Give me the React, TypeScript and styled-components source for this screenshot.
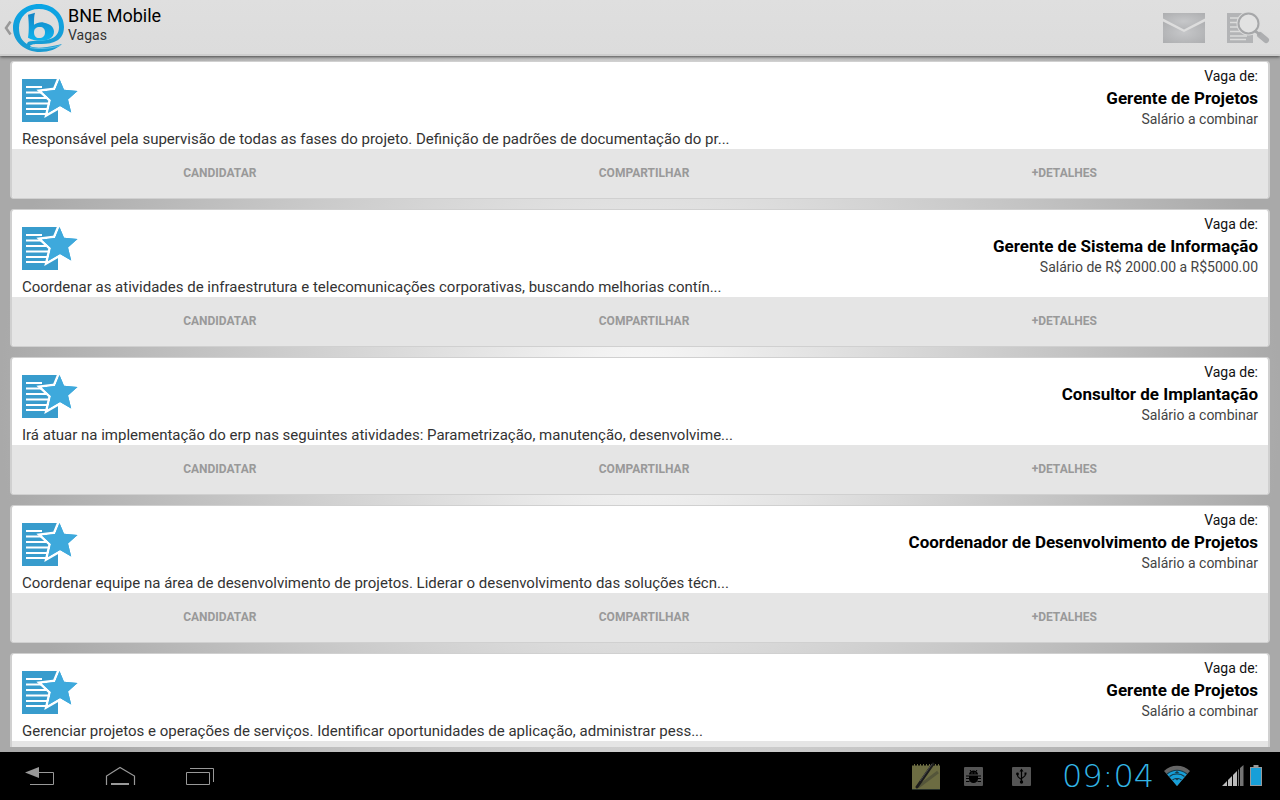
import React from "react";
import styled, { createGlobalStyle } from "styled-components";

const GlobalStyle = createGlobalStyle`
  *, *::before, *::after { box-sizing: border-box; }
  body {
    margin: 0;
    font-family: Roboto, "Noto Sans", sans-serif;
    color: #333;
  }
  button { font: inherit; color: inherit; border: 0; background: none; padding: 0; cursor: pointer; }
  h1, h2, p, ul { margin: 0; padding: 0; font-weight: 400; }
  svg { display: block; }
`;

const Screen = styled.div`
  display: flex;
  flex-direction: column;
  height: 100vh;
  background: #000;
`;

const ActionBar = styled.header`
  display: flex;
  flex: none;
  justify-content: space-between;
  height: 56px;
  padding-right: 10px;
  background: linear-gradient(#dfdfdf, #dcdcdc);
  border-bottom: 2px solid #cecece;
  box-shadow: 0 1px 3px #444;
  z-index: 1;
`;

const UpButton = styled.button`
  display: flex;
  gap: 3px;
  padding: 4px 0 0 4px;
  text-align: left;
`;

const UpContent = styled.span`
  display: flex;
  align-items: center;
  height: 48px;
`;

const Titles = styled.span`
  display: flex;
  flex-direction: column;
`;

const AppTitle = styled.span`
  font-size: 18px;
  line-height: 24px;
  color: #000;
`;

const ScreenTitle = styled.span`
  font-size: 14px;
  line-height: 14px;
`;

const Actions = styled.div`
  display: flex;
  align-items: center;
  gap: 21px;
  padding-top: 2px;
`;

const Main = styled.main`
  flex: 1;
  min-height: 0;
  padding: 5px 10px;
  background: radial-gradient(circle 640px at 50% 50%, #fafafa, #a9a9a9);
`;

const JobList = styled.ul`
  display: flex;
  flex-direction: column;
  gap: 10px;
  height: 100%;
  overflow-y: auto;
  scrollbar-width: none;
  list-style: none;
`;

const Card = styled.li`
  flex: none;
  border: solid #d0d0d0;
  border-width: 1px 2px;
  border-radius: 4px;
  background: #fff;
  overflow: hidden;
`;

const CardBody = styled.div`
  display: grid;
  grid-template-columns: auto 1fr;
  align-content: start;
  padding: 4px 10px 0;
  height: 87px;
`;

const JobIcon = styled.div`
  padding-top: 13px;
`;

const JobHeading = styled.div`
  height: 63px;
  text-align: right;
`;

const Kicker = styled.p`
  font-size: 14px;
  line-height: 20px;
  color: #111;
`;

const JobTitle = styled.h2`
  font-size: 17px;
  line-height: 24px;
  font-weight: 700;
  color: #000;
`;

const Salary = styled.p`
  font-size: 14px;
  line-height: 18px;
  color: #444;
`;

const Description = styled.p`
  grid-column: 1 / -1;
  font-size: 15px;
  line-height: 20px;
  white-space: nowrap;
`;

const CardActions = styled.div`
  display: flex;
  height: 49px;
  background: #e5e5e5;
`;

const CardAction = styled.button`
  flex: 1 1 auto;
  padding-bottom: 2px;
  font-size: 12px;
  line-height: 16px;
  font-weight: 700;
  color: #999;
`;

const SystemBar = styled.footer`
  display: flex;
  flex: none;
  justify-content: space-between;
  height: 48px;
  padding-right: 18px;
  background: #000;
`;

const NavKeys = styled.nav`
  display: flex;
`;

const NavKey = styled.button`
  display: grid;
  place-items: center;
  width: 80px;
`;

const Status = styled.div`
  display: flex;
  align-items: center;
`;

const Notifications = styled.div`
  display: flex;
  align-items: center;
  gap: 24px;
  padding-right: 16px;
`;

const Clock = styled.time`
  width: 112px;
  font-family: "DejaVu Sans Light", "DejaVu Sans", sans-serif;
  font-weight: 200;
  font-size: 32px;
  line-height: 40px;
  text-align: center;
  color: #33b5e5;
`;

const Gauges = styled.div`
  display: flex;
  align-items: center;
  gap: 6px;
`;

const Wifi = styled.div`
  padding-right: 32px;
`;

const Logo = () => (
  <svg width="52" height="48" viewBox="0 0 52 48" fill="none">
    <defs>
      <linearGradient id="ring" x1="0" y1="0" x2="0" y2="1">
        <stop offset="0" stopColor="#0aa5e6" />
        <stop offset="1" stopColor="#1c9ad0" />
      </linearGradient>
      <linearGradient id="letter" x1="0" y1="0" x2="0" y2="1">
        <stop offset="0" stopColor="#1483c4" />
        <stop offset="1" stopColor="#10b4ee" />
      </linearGradient>
    </defs>
    <path
      fillRule="evenodd"
      fill="url(#ring)"
      d="M26 0C40 0 51 10 51 23c0 8-4 13-10 15-5 2-11 2-17 2-4 0-7 1-7 2 3 2 10 2 17 1 6-1 11-2 15-3-5 5-13 8-22 8C12 48 0 38 0 24 0 10 12 0 26 0ZM26 5C14 5 6 13 6 24c0 8 3 13 8 16 0-2 2-3 6-3 6-1 12 0 17-2 6-2 9-6 9-12C46 12 37 5 26 5Z"
    />
    <path
      fillRule="evenodd"
      fill="url(#letter)"
      d="M22 8.700c-1 3-1 7-1 12 3-2 7-3 10-2 6 1 10 4 10 9 0 6-6 9-13 9-5 0-10-1-13-3 1-6 1-15 0-23 3-1 5-1 7-2ZM27 23c-4 0-6 2-6 5 0 4 2 6 5 6 4 0 6-2 6-6 0-3-2-5-5-5Z"
    />
    <path d="M17 43.500c8 2 22 1 30-2" stroke="#5fc0e8" />
  </svg>
);

const MailIcon = () => (
  <svg width="42" height="30" viewBox="0 0 42 30">
    <defs>
      <radialGradient id="grey" cx=".5" cy=".5" r=".7">
        <stop offset="0" stopColor="#c6c7c9" />
        <stop offset="1" stopColor="#adaeb0" />
      </radialGradient>
    </defs>
    <path d="M0 0h42v5.500L21 16.500 0 5.500Z" fill="url(#grey)" />
    <path d="M0 8.500 21 19 42 8.500V30H0Z" fill="url(#grey)" />
  </svg>
);

const DocSearchIcon = () => (
  <svg width="44" height="32" viewBox="0 0 44 32" fill="none">
    <path d="M1 1h26v30H1Z" fill="#b3b4b6" />
    <path d="M4 6h10M4 10.500h10M4 15h10M4 19.500h12M4 24h17M4 27.500h16" stroke="#dcdcdc" strokeWidth="1.500" />
    <circle cx="22.500" cy="11.500" r="12" fill="#dcdcdc" />
    <circle cx="22.500" cy="11.500" r="10" fill="#e2e2e2" stroke="#a6a7a9" strokeWidth="2" />
    <path d="m29 19 5 4" stroke="#a6a7a9" strokeWidth="2.500" />
    <path d="m34 23 6 5" stroke="#dcdcdc" strokeWidth="9" strokeLinecap="round" />
    <path d="m34 23 6 5" stroke="#adaeb0" strokeWidth="6" strokeLinecap="round" />
    <path d="m30 19.500 4 3.500" stroke="#a6a7a9" strokeWidth="2.500" />
  </svg>
);

const VacancyIcon = () => (
  <svg width="56" height="44" viewBox="0 0 56 44">
    <path d="M0 0h36v43H0Z" fill="#389ccd" />
    <path d="M4 8h16M4 13.500h17M4 19h20M4 24.500h23M4 30h22M4 35h22" stroke="#fff" strokeWidth="2" />
    <path
      d="M37.500 0 42 10.800 55.500 12 46 20.500 49.200 33.500 38 27 26 34 29 21 20 12.500 33 11Z"
      fill="#3ea9dc"
      stroke="#fff"
      strokeWidth="5"
      paintOrder="stroke"
    />
    <path
      d="M37.500 0 42 10.800 55.500 12 46 20.500 49.200 33.500 38 27 26 34 29 21 20 12.500 33 11Z"
      fill="#3ea9dc"
    />
  </svg>
);

const BackIcon = () => (
  <svg width="32" height="24" viewBox="0 0 32 24" fill="none" stroke="#999">
    <path d="M1 8.500 15 3v11Z" fill="#999" stroke="none" />
    <path d="M15 8.500h14.500v12H6" />
  </svg>
);

const HomeIcon = () => (
  <svg width="32" height="24" viewBox="0 0 32 24" fill="none" stroke="#999">
    <path d="M2.500 21v-9L16 3.500 30.500 12v9" strokeWidth="1.200" />
    <path d="M7 20h18" strokeWidth="2" />
  </svg>
);

const RecentsIcon = () => (
  <svg width="32" height="24" viewBox="0 0 32 24" fill="none" stroke="#999">
    <path d="M2.500 8.500h23v12h-23ZM6 4.500h23.500V18" />
  </svg>
);

const NoteIcon = () => (
  <svg width="28" height="28" viewBox="0 0 28 28" fill="none">
    <path d="M0 2h28v26H0Z" fill="#6c6c42" />
    <path d="M0 2.500h28" stroke="#000" strokeWidth="2" strokeDasharray="2 1" />
    <path d="M0 27.500h28" stroke="#26302a" />
    <path d="M6 25 26 10" stroke="#54553a" strokeWidth="3" />
    <path d="M5 25 21 2" stroke="#1c1c1c" strokeWidth="3" strokeLinecap="round" />
    <path d="M8 19 20 2" stroke="#4a4a4a" />
  </svg>
);

const DebugIcon = () => (
  <svg width="24" height="20" viewBox="0 0 24 20" fill="none">
    <rect width="19" height="19" y="1" rx="1" fill="#555" />
    <path d="M5 8.500a4.500 4 0 0 1 9 0ZM5 9.500h9V13a4.500 4 0 0 1-9 0Z" fill="#000" />
    <path d="m6 4 1.500 2M13 4l-1.500 2M2 10h3M2 12.500h3M2 15.500h3.500M14 10h3M14 12.500h3M13.500 15.500H17" stroke="#000" />
    <path d="M7.500 7h1M10.500 7h1" stroke="#555" />
  </svg>
);

const UsbIcon = () => (
  <svg width="24" height="20" viewBox="0 0 24 20" fill="none" stroke="#000" strokeWidth="1.200">
    <rect width="19" height="19" y="1" rx="1" fill="#555" stroke="none" />
    <path d="M9.500 4v12M9.500 14c0-2-4-1-4-5M9.500 13c0-2 4-1 4-5" />
    <path d="m7.500 5.500 2-3 2 3ZM12.500 6.500h2v2h-2Z" fill="#000" stroke="none" />
    <circle cx="5.500" cy="8" r="1.400" fill="#000" stroke="none" />
    <circle cx="9.500" cy="16" r="1.700" fill="#000" stroke="none" />
  </svg>
);

const WifiIcon = () => (
  <svg width="26" height="22" viewBox="0 0 26 22" fill="none">
    <path d="M0 6C7-1 19-1 26 6L13 21Z" fill="#666" />
    <path d="M3 9c6-5 14-5 20 0L13 21Z" fill="#179fd8" />
    <path d="M3 9c6-5 14-5 20 0M5.500 11.500c4-3.500 11-3.500 15 0M8.500 15c2-2 7-2 9 0" stroke="#173b4b" strokeWidth="1.200" />
    <path d="m10.500 8 2.500-2 2.500 2ZM10.500 13h5L13 15.500Z" fill="#173b4b" />
  </svg>
);

const SignalIcon = () => (
  <svg width="22" height="22" viewBox="0 0 22 22">
    <path d="M0 21 5 16v5ZM6 15l4-4v10H6ZM11 10l4-4v15h-4Z" fill="#bbb" />
    <path d="m16 5 1-1v17h-1ZM18 3l3.500-3v21H18Z" fill="#737373" />
  </svg>
);

const BatteryIcon = () => (
  <svg width="12" height="22" viewBox="0 0 12 22">
    <path d="M3.500 0h5v2H12v19H0V2h3.500Z" fill="#999" />
    <path d="M1 3h10v17H1Z" fill="#179fd8" />
  </svg>
);

const combine = "Salário a combinar";

const jobs = [
  {
    title: "Gerente de Projetos",
    salary: combine,
    text: "Responsável pela supervisão de todas as fases do projeto. Definição de padrões de documentação do pr...",
  },
  {
    title: "Gerente de Sistema de Informação",
    salary: "Salário de R$ 2000.00 a R$5000.00",
    text: "Coordenar as atividades de infraestrutura e telecomunicações corporativas, buscando melhorias contín...",
  },
  {
    title: "Consultor de Implantação",
    salary: combine,
    text: "Irá atuar na implementação do erp nas seguintes atividades: Parametrização, manutenção, desenvolvime...",
  },
  {
    title: "Coordenador de Desenvolvimento de Projetos",
    salary: combine,
    text: "Coordenar equipe na área de desenvolvimento de projetos. Liderar o desenvolvimento das soluções técn...",
  },
  {
    title: "Gerente de Projetos",
    salary: combine,
    text: "Gerenciar projetos e operações de serviços. Identificar oportunidades de aplicação, administrar pess...",
  },
];

export default function App() {
  return (
    <>
      <GlobalStyle />
      <Screen>
        <ActionBar>
          <UpButton>
            <UpContent>
              <svg width="9" height="16" viewBox="0 0 9 16" fill="none">
                <path d="M6.500 1.500 2 8l4.500 6.500" stroke="#999" strokeWidth="2.500" />
              </svg>
              <Logo />
            </UpContent>
            <Titles>
              <AppTitle>BNE Mobile</AppTitle>
              <ScreenTitle>Vagas</ScreenTitle>
            </Titles>
          </UpButton>
          <Actions>
            <button aria-label="Mensagens">
              <MailIcon />
            </button>
            <button aria-label="Pesquisar vagas">
              <DocSearchIcon />
            </button>
          </Actions>
        </ActionBar>
        <Main>
          <JobList>
            {jobs.map((job, i) => (
              <Card key={i}>
                <CardBody>
                  <JobIcon>
                    <VacancyIcon />
                  </JobIcon>
                  <JobHeading>
                    <Kicker>Vaga de:</Kicker>
                    <JobTitle>{job.title}</JobTitle>
                    <Salary>{job.salary}</Salary>
                  </JobHeading>
                  <Description>{job.text}</Description>
                </CardBody>
                <CardActions>
                  <CardAction>CANDIDATAR</CardAction>
                  <CardAction>COMPARTILHAR</CardAction>
                  <CardAction>+DETALHES</CardAction>
                </CardActions>
              </Card>
            ))}
          </JobList>
        </Main>
        <SystemBar>
          <NavKeys>
            <NavKey aria-label="Voltar"><BackIcon /></NavKey>
            <NavKey aria-label="Início"><HomeIcon /></NavKey>
            <NavKey aria-label="Recentes"><RecentsIcon /></NavKey>
          </NavKeys>
          <Status>
            <Notifications>
              <NoteIcon />
              <DebugIcon />
              <UsbIcon />
            </Notifications>
            <Clock>09:04</Clock>
            <Wifi><WifiIcon /></Wifi>
            <Gauges>
              <SignalIcon />
              <BatteryIcon />
            </Gauges>
          </Status>
        </SystemBar>
      </Screen>
    </>
  );
}
